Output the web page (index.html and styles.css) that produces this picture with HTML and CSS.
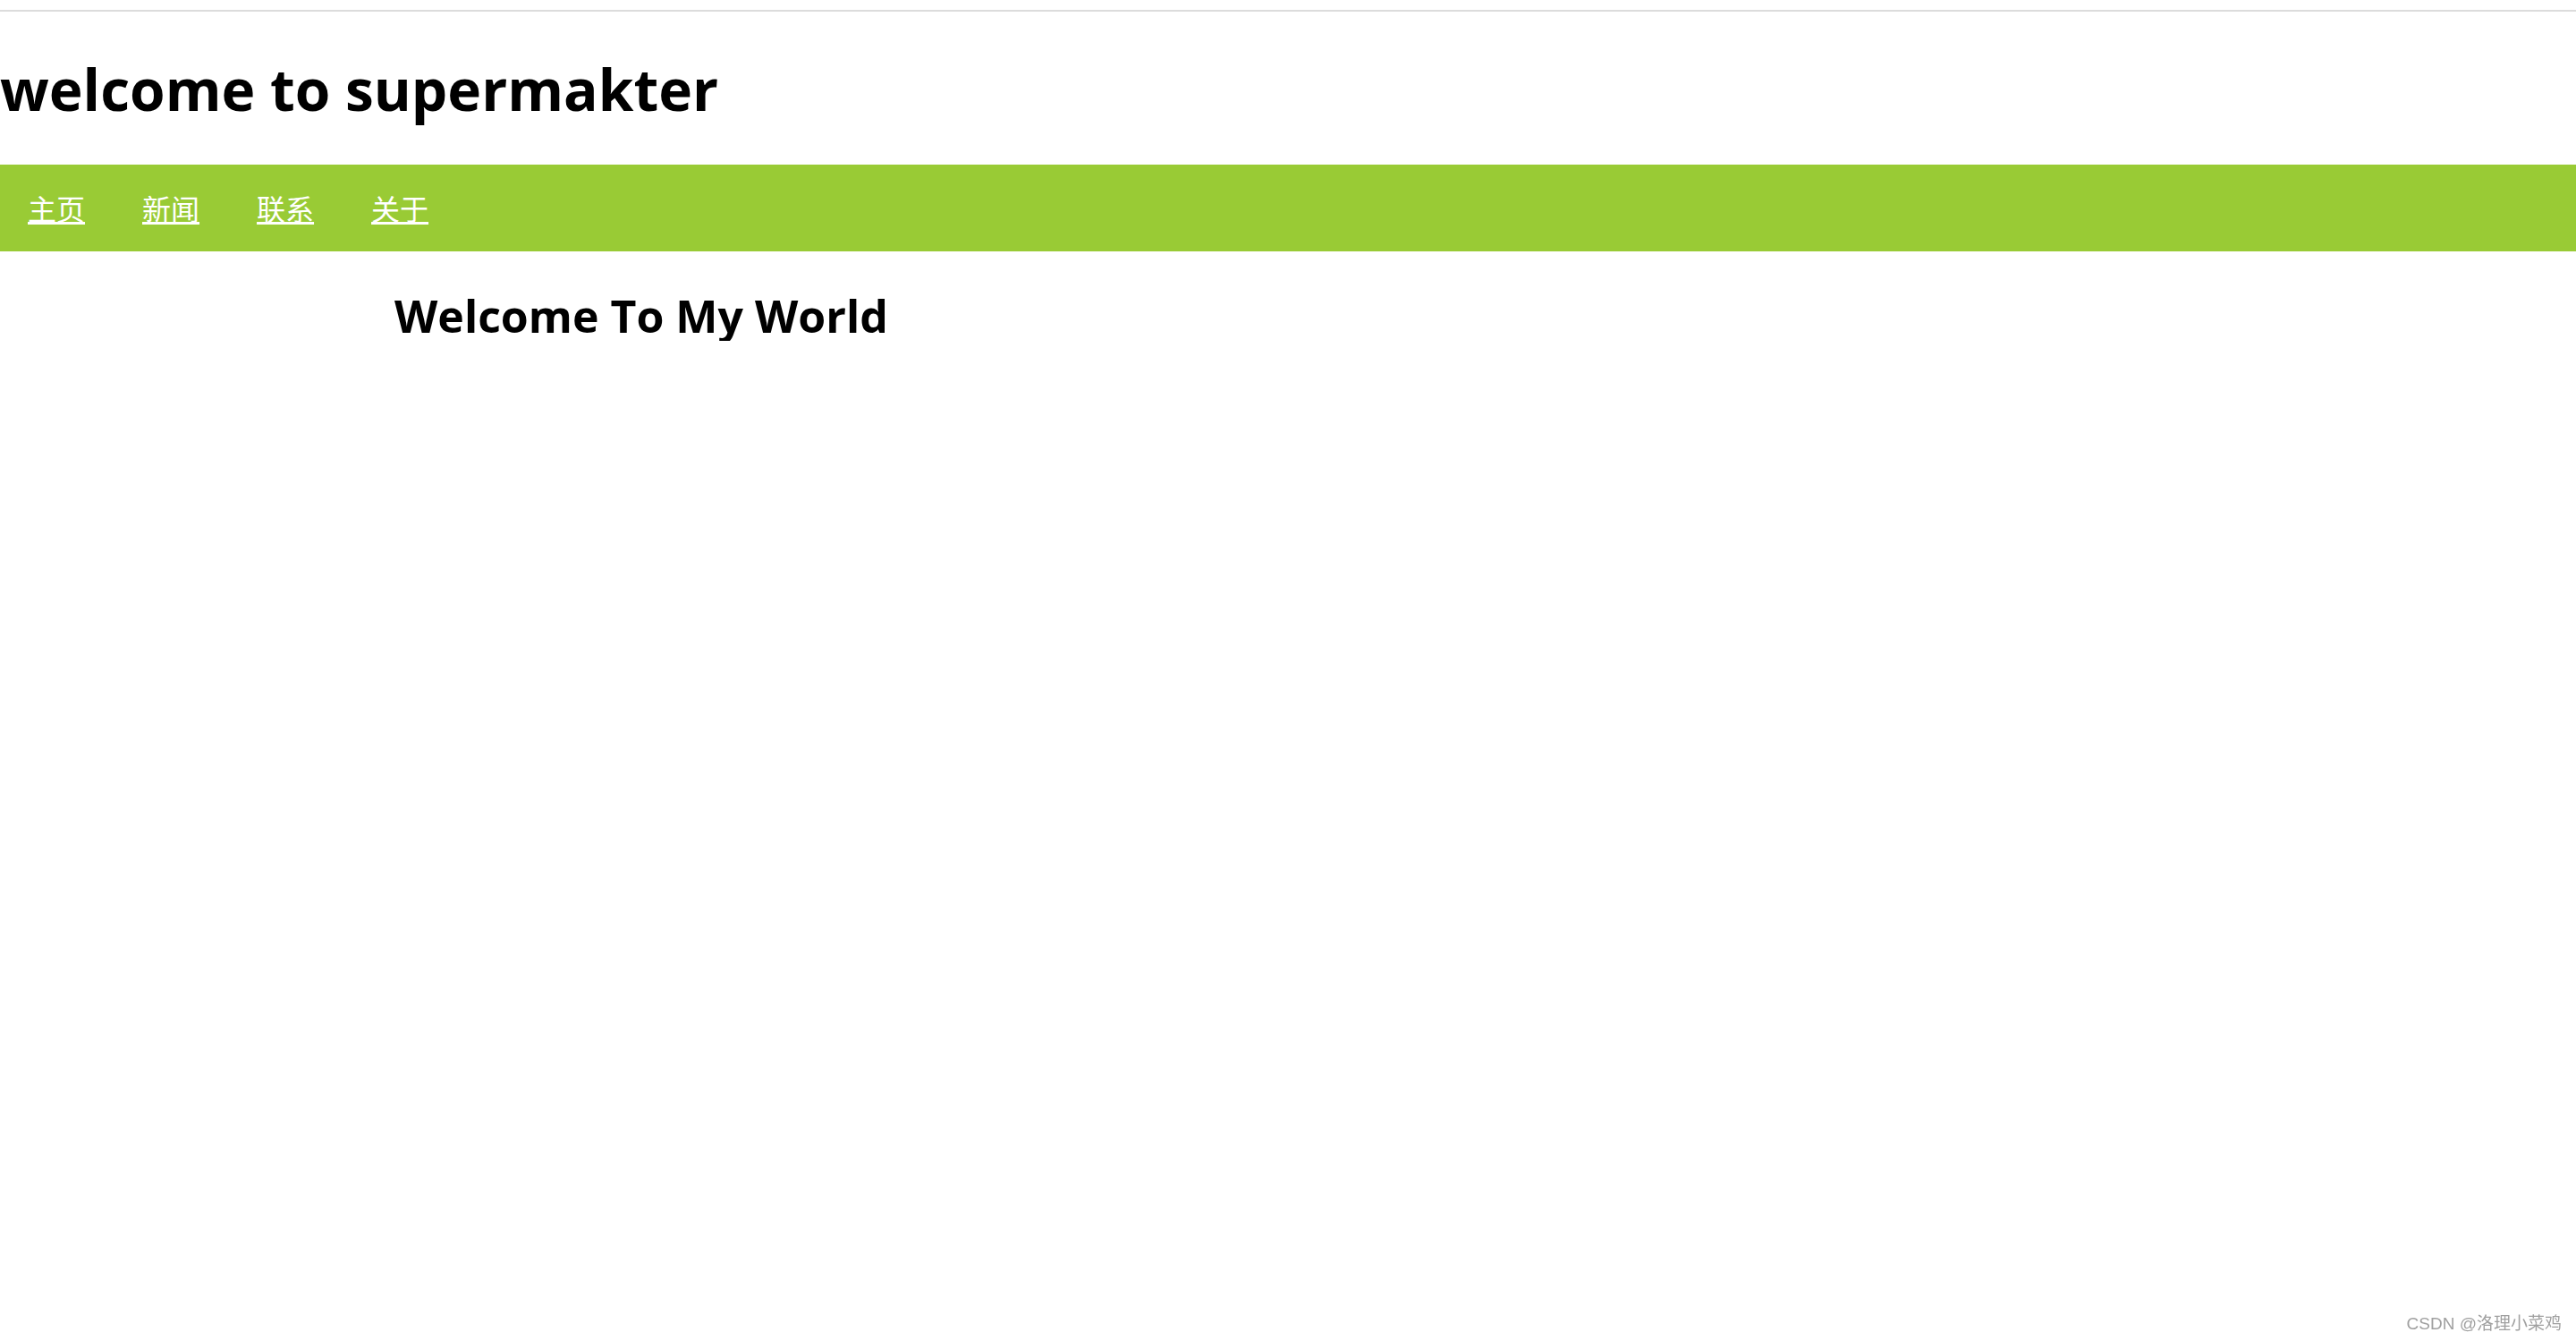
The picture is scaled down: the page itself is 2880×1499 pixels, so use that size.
FILE: index.html
```html
<!DOCTYPE html>
<html lang="zh-CN">
<head>
<meta charset="utf-8">
<title>welcome to supermakter</title>
<link rel="stylesheet" href="styles.css">
</head>
<body>
<div class="topline"></div>
<header class="header">
  <h1 class="title">welcome to supermakter</h1>
</header>
<nav class="nav">
  <ul class="nav-list">
    <li><a class="nav-link" href="#">主页</a></li>
    <li><a class="nav-link" href="#">新闻</a></li>
    <li><a class="nav-link" href="#">联系</a></li>
    <li><a class="nav-link" href="#">关于</a></li>
  </ul>
</nav>
<main class="content">
  <h2 class="subtitle">Welcome To My World</h2>
</main>
<div class="watermark">CSDN @洛理小菜鸡</div>
</body>
</html>
```

FILE: styles.css
```css
html, body {
  margin: 0;
  padding: 0;
  background: #fff;
  font-family: "Open Sans", "Noto Sans CJK SC", sans-serif;
  color: #000;
}

.topline {
  margin-top: 11px;
  height: 2px;
  background: #dcdcdc;
}

.header {
  height: 171px;
  box-sizing: border-box;
  padding-top: 55px;
}

.title {
  margin: 0;
  font-size: 64px;
  line-height: 64px;
  font-weight: 700;
}

.nav {
  background: #99cb35;
  height: 97px;
}

.nav-list {
  list-style: none;
  margin: 0;
  padding: 0;
  display: flex;
}

.nav-link {
  display: block;
  padding: 0 33px 0 31px;
  line-height: 97px;
  font-size: 32px;
  color: #fff;
  text-decoration: underline;
  font-family: "Noto Sans CJK SC", sans-serif;
}

.content {
  padding: 44px 0 0 441px;
}

.subtitle {
  margin: 0;
  font-size: 50px;
  line-height: 56px;
  font-weight: 700;
}

.watermark {
  position: fixed;
  right: 16px;
  bottom: 8px;
  font-family: "Liberation Sans", "Noto Sans CJK SC", sans-serif;
  font-size: 19px;
  color: #a0a0a0;
}
```
